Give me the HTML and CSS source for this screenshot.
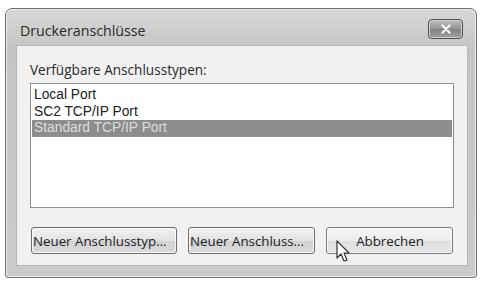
FILE: index.html
```html
<!DOCTYPE html>
<html lang="de">
<head>
  <meta charset="UTF-8" />
  <title>Druckeranschlüsse</title>
  <link rel="stylesheet" href="styles.css">
</head>
<body>
  <div class="window">
    <div class="titlebar">
      <span class="title">Druckeranschlüsse</span>
      <span class="close-btn">
        <svg width="14" height="10" viewBox="0 0 14 10"><path d="M3.5 1.5 L10.5 8.5 M10.5 1.5 L3.5 8.5" stroke="#fff" stroke-width="2.4" stroke-linecap="round"/></svg>
      </span>
    </div>
    <div class="content">
      <div class="label">Verfügbare Anschlusstypen:</div>
      <div class="listbox">
        <div class="item">Local Port</div>
        <div class="item">SC2 TCP/IP Port</div>
        <div class="item selected">Standard TCP/IP Port</div>
      </div>
      <div class="buttons">
        <button class="btn btn-wide">Neuer Anschlusstyp...</button>
        <button class="btn">Neuer Anschluss...</button>
        <button class="btn btn-hover">Abbrechen</button>
      </div>
    </div>
  </div>
  <svg class="cursor" width="16" height="24" viewBox="0 0 16 24">
    <path d="M1 1 L1 18 L5 14 L8 21 L11 20 L8 13 L13 13 Z" fill="#fff" stroke="#333" stroke-width="1.2" stroke-linejoin="round"/>
  </svg>
</body>
</html>
```

FILE: styles.css
```css
* { margin: 0; padding: 0; box-sizing: border-box; }
body {
  background: #fff;
  font-family: "Open Sans", "Noto Sans", sans-serif;
  font-size: 12px;
  color: #222;
  width: 482px;
  height: 284px;
  position: relative;
  overflow: hidden;
}
.window {
  margin: 8px 0 0 5px;
  width: 472px;
  height: 270px;
  border: 1px solid #6f6f6f;
  border-radius: 7px 7px 3px 3px;
  background: linear-gradient(#d8d8d8, #c4c4c4 40px, #cbcbcb);
  padding: 0 8px 11px 10px;
  display: flex;
  flex-direction: column;
  box-shadow: inset 0 0 0 1px #ededed;
}
.titlebar {
  height: 36px;
  display: flex;
  align-items: center;
  justify-content: space-between;
  padding: 4px 4px 0 4px;
}
.title {
  font-size: 14.2px;
  color: #2a2a2a;
  margin-top: 2px;
}
.close-btn {
  width: 35px;
  height: 20px;
  margin-right: 1px;
  border: 1px solid #505050;
  border-radius: 4px;
  background: linear-gradient(#bdbdbd, #949494 50%, #828282 51%, #a0a0a0);
  display: flex;
  align-items: center;
  justify-content: center;
  box-shadow: inset 0 0 0 1px #d0d0d0;
}
.content {
  flex: 1;
  background: #f1f1f1;
  border: 1px solid #b8b8b8;
  padding: 14px 13px 0 13px;
  display: flex;
  flex-direction: column;
}
.label {
  font-size: 13.6px;
  color: #2a2a2a;
  height: 23px;
  line-height: 19px;
}
.listbox {
  height: 125px;
  background: #fff;
  border: 1px solid #8c8c8c;
  padding: 3px 1px;
}
.item {
  font-family: "Liberation Sans", Arial, sans-serif;
  font-size: 13.8px;
  line-height: 16.5px;
  padding-left: 2px;
  color: #222;
}
.item.selected {
  background: #8d8d8d;
  color: #dcdcdc;
}
.buttons {
  display: flex;
  gap: 11px;
  margin-top: 19px;
  padding-left: 1px;
}
.btn {
  font-family: "Open Sans", "Noto Sans", sans-serif;
  font-size: 13.3px;
  color: #222;
  width: 127px;
  height: 27px;
  border: 1px solid #6d6d6d;
  border-radius: 3px;
  background: linear-gradient(#f2f2f2, #e2e2e2 50%, #d2d2d2 51%, #dadada);
  box-shadow: inset 0 0 0 1px #fafafa;
  text-align: left;
  padding-left: 1px;
  white-space: nowrap;
  overflow: hidden;
}
.btn-wide { width: 146px; }
.btn-hover {
  text-align: center;
  border-color: #7a7a7a;
  background: linear-gradient(#f6f6f6, #ececec 50%, #dedede 51%, #e6e6e6);
}
.cursor {
  position: absolute;
  left: 336px;
  top: 240px;
}
```
